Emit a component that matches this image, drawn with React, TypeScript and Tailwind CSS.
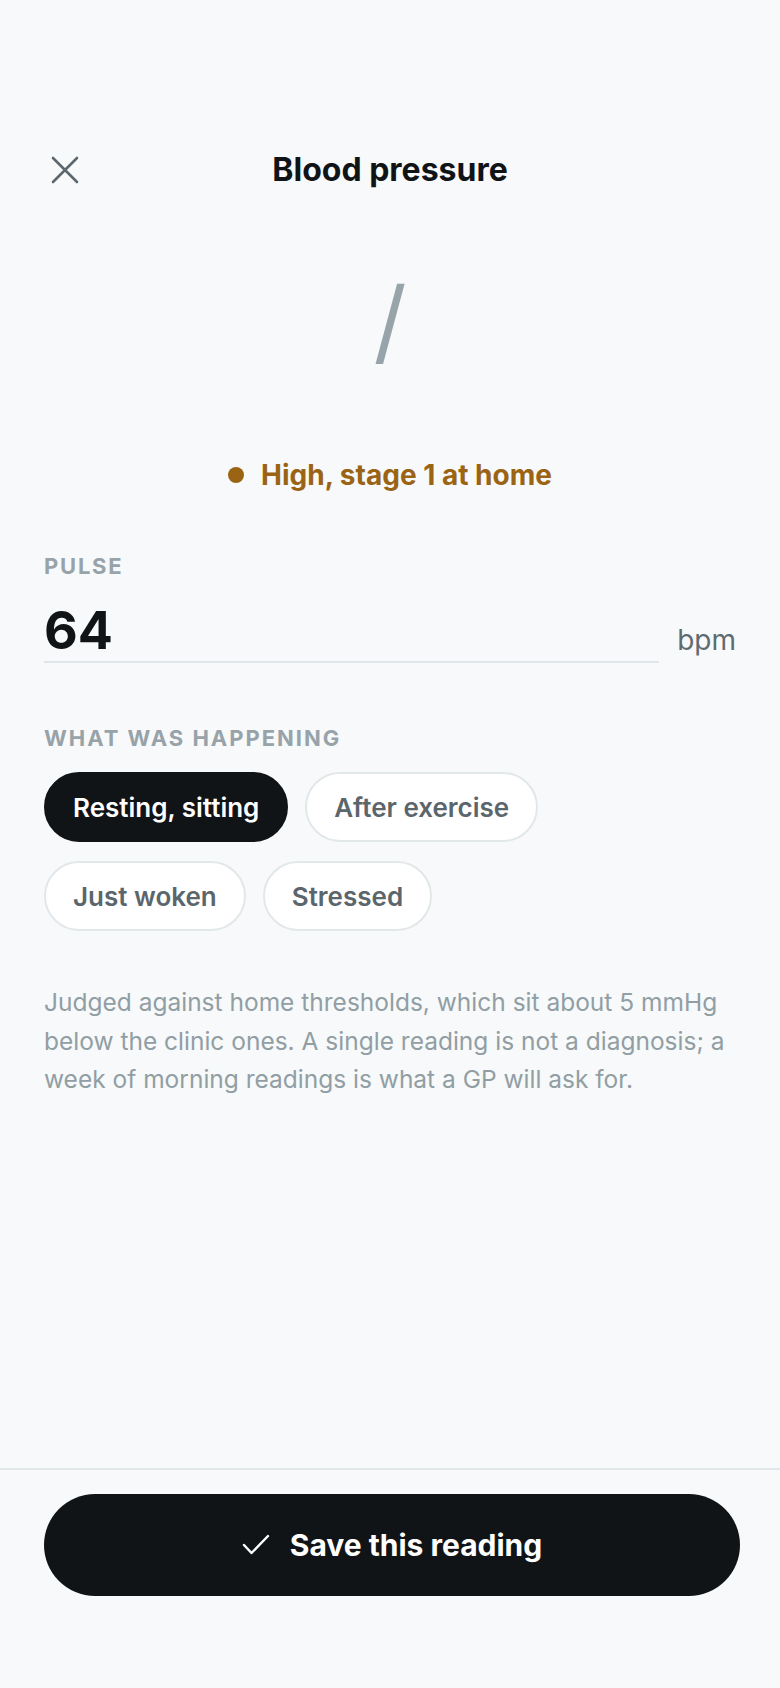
import React, { useState } from 'react';

const contexts = ['Resting, sitting', 'After exercise', 'Just woken', 'Stressed'];

const CloseIcon = () => (
  <svg width="28" height="28" viewBox="0 0 28 28" fill="none" stroke="#5c686e" strokeWidth="2.6" strokeLinecap="round">
    <path d="M2 2 L26 26 M26 2 L2 26" />
  </svg>
);

const CheckIcon = () => (
  <svg width="28" height="22" viewBox="0 0 28 22" fill="none" stroke="white" strokeWidth="2.4" strokeLinecap="round" strokeLinejoin="round">
    <path d="M2 11 L9.5 19 L26 2" />
  </svg>
);

export default function App() {
  const [picked, setPicked] = useState('Resting, sitting');

  return (
    <div className="h-[1688px] flex flex-col bg-[#f7f9fa] font-['Inter','Noto_Sans',sans-serif] text-[#111417]">
      <div className="flex-1 px-[44px]">
        {/* Header */}
        <header className="mt-[144px] grid grid-cols-[42px_1fr_42px] items-center h-[52px]">
          <button className="w-[42px] h-[42px] flex items-center justify-center">
            <CloseIcon />
          </button>
          <h1 className="text-center text-[32px] font-bold">Blood pressure</h1>
          <div />
        </header>

        {/* Reading, both values still empty */}
        <div className="mt-[75px] flex justify-center">
          <span className="text-[92px] leading-[100px] font-normal text-[#97a4a9]">/</span>
        </div>

        {/* Status */}
        <div className="mt-[87px] flex items-center justify-center gap-[17px] h-[34px]">
          <span className="w-[16px] h-[16px] rounded-full bg-[#9a6414]" />
          <span className="text-[28px] leading-[34px] font-bold text-[#9a6414]">High, stage 1 at home</span>
        </div>

        {/* Pulse */}
        <div className="mt-[60px]">
          <div className="text-[22px] leading-[28px] font-bold tracking-[0.08em] text-[#97a3a9]">PULSE</div>
          <div className="mt-[21px] flex items-end gap-[18px]">
            <div className="flex-1 border-b-2 border-[#dee7e9]">
              <span className="block text-[52px] leading-[60px] font-bold">64</span>
            </div>
            <span className="pb-[6px] text-[28px] leading-[34px] text-[#5f6b70]">bpm</span>
          </div>
        </div>

        {/* Context */}
        <div className="mt-[61px]">
          <div className="text-[22px] leading-[28px] font-bold tracking-[0.09em] text-[#97a3a9]">WHAT WAS HAPPENING</div>
          <div className="mt-[20px] flex flex-wrap gap-x-[17px] gap-y-[19px]">
            {contexts.map((c) => (
              <button
                key={c}
                onClick={() => setPicked(c)}
                className={
                  c === picked
                    ? 'h-[70px] px-[27px] rounded-full border-2 border-[#111417] bg-[#111417] text-white text-[26px] font-semibold'
                    : 'h-[70px] px-[27px] rounded-full border-2 border-[#e2e8ea] bg-white text-[#5b666c] text-[26px] font-semibold'
                }
              >
                {c}
              </button>
            ))}
          </div>
        </div>

        <p className="mt-[52px] text-[24.5px] leading-[38.5px] text-[#919ea4]">
          Judged against home thresholds, which sit about 5 mmHg below the clinic ones. A single reading is not a diagnosis; a week of morning readings is what a GP will ask for.
        </p>
      </div>

      {/* Footer */}
      <footer className="border-t-2 border-[#e1e8ea] pl-[44px] pr-[40px] pt-[24px] pb-[92px]">
        <button className="w-full h-[102px] rounded-full bg-[#111417] text-white flex items-center justify-center gap-[20px]">
          <CheckIcon />
          <span className="text-[30px] font-bold">Save this reading</span>
        </button>
      </footer>
    </div>
  );
}
